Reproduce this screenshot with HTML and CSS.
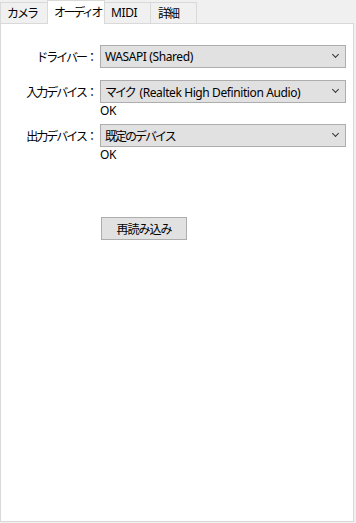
FILE: index.html
```html
<!DOCTYPE html>
<html lang="ja">
<head>
<meta charset="UTF-8">
<title>設定</title>
<link rel="stylesheet" href="styles.css">
</head>
<body>
<div class="tabs">
	<div class="tab ja">カメラ</div>
	<div class="tab ja active">オーディオ</div>
	<div class="tab">MIDI</div>
	<div class="tab ja">詳細</div>
</div>
<div class="panel">
	<div class="row first">
		<div class="label ja">ドライバー：</div>
		<div class="field">
			<div class="select">WASAPI (Shared)<span class="chev"></span></div>
		</div>
	</div>
	<div class="row second">
		<div class="label ja">入力デバイス：</div>
		<div class="field">
			<div class="select"><span class="ja">マイク</span> (Realtek High Definition Audio)<span class="chev"></span></div>
			<div class="status">OK</div>
		</div>
	</div>
	<div class="row third">
		<div class="label ja">出力デバイス：</div>
		<div class="field">
			<div class="select"><span class="ja">既定のデバイス</span><span class="chev"></span></div>
			<div class="status">OK</div>
		</div>
	</div>
	<div class="actions">
		<button class="btn" type="button">再読み込み</button>
	</div>
</div>
</body>
</html>
```

FILE: styles.css
```css
* {
	box-sizing: border-box;
}
body {
	margin: 0;
	background: #f0f0f0;
	font-family: "Segoe UI", "Noto Sans", "Noto Sans CJK JP", sans-serif;
	font-size: 12px;
	letter-spacing: -0.4px;
	color: #000;
}
.ja {
	letter-spacing: -2px;
	font-family: "Noto Sans CJK JP", sans-serif;
}
.select .ja {
	padding-right: 2px;
}
.tabs {
	display: flex;
	height: 23px;
	align-items: flex-end;
	position: relative;
	z-index: 1;
}
.tab {
	height: 21px;
	line-height: 19px;
	padding: 0 6px;
	border: 1px solid #d9d9d9;
	border-bottom: none;
	background: #f0f0f0;
	margin-right: -1px;
	white-space: nowrap;
}
.tab.active {
	height: 24px;
	margin: 0 -1px -1px -1px;
	padding: 0 0 0 6px;
	line-height: 22px;
	letter-spacing: -2.4px;
	background: #fff;
	position: relative;
}
.tabs .tab:nth-child(1) { width: 49px; }
.tabs .tab:nth-child(2) { width: 58px; }
.tabs .tab:nth-child(3) { width: 47px; }
.tabs .tab:nth-child(4) { width: 47px; padding-left: 7px; }
.panel {
	width: 354px;
	height: 499px;
	background: #fff;
	border: 1px solid #d9d9d9;
	padding: 21px 7px 0 0;
}
.row {
	display: flex;
	align-items: flex-start;
}
.row.second {
	margin-top: 12px;
}
.row.third {
	margin-top: 5px;
}
.label {
	width: 99px;
	flex: none;
	height: 23px;
	line-height: 23px;
	text-align: right;
	padding-right: 4px;
	white-space: nowrap;
}
.field {
	flex: 1;
}
.select {
	position: relative;
	height: 23px;
	line-height: 21px;
	padding-left: 4px;
	background: #e1e1e1;
	border: 1px solid #adadad;
	white-space: nowrap;
}
.chev {
	position: absolute;
	right: 7px;
	top: 6px;
	width: 5px;
	height: 5px;
	border-right: 1px solid #333;
	border-bottom: 1px solid #333;
	transform: rotate(45deg);
}
.status {
	height: 16px;
	line-height: 16px;
}
.actions {
	padding: 54px 0 0 100px;
}
.btn {
	width: 86px;
	height: 23px;
	padding: 0;
	font-family: "Noto Sans CJK JP", sans-serif;
	font-size: 12px;
	letter-spacing: -1px;
	color: #000;
	background: #e1e1e1;
	border: 1px solid #adadad;
}
```
